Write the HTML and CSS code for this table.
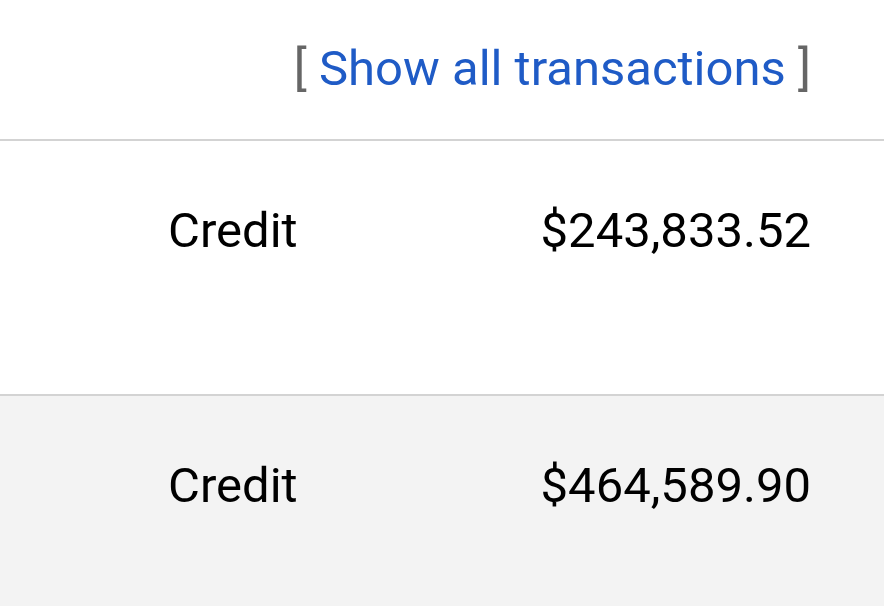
FILE: index.html
```html
<!DOCTYPE html>
<html>
<head>
<meta charset="utf-8">
<link rel="stylesheet" href="styles.css">
</head>
<body>
<div class="panel">
  <div class="header">
    <span class="bracket">[</span> <a class="link" href="#">Show all transactions</a> <span class="bracket">]</span>
  </div>
  <div class="row">
    <span class="type">Credit</span>
    <span class="amount">$243,833.52</span>
  </div>
  <div class="row alt">
    <span class="type">Credit</span>
    <span class="amount">$464,589.90</span>
  </div>
</div>
</body>
</html>
```
FILE: styles.css
```css
html, body {
  margin: 0;
  padding: 0;
  background: #ffffff;
}
body {
  font-family: Roboto, "Liberation Sans", sans-serif;
  font-size: 49px;
  color: #000000;
}
.panel {
  display: flex;
  flex-direction: column;
}
.header {
  height: 141px;
  box-sizing: border-box;
  padding: 40px 73px 0 0;
  text-align: right;
  line-height: 57px;
  border-bottom: 2px solid #d3d3d3;
}
.bracket {
  color: #666666;
}
.link {
  color: #1f5bc6;
  text-decoration: none;
}
.row {
  height: 255px;
  box-sizing: border-box;
  padding: 61px 73px 0 168px;
  display: flex;
  justify-content: space-between;
  line-height: 57px;
  border-bottom: 2px solid #d3d3d3;
}
.row.alt {
  background: #f3f3f3;
  border-bottom: none;
}
```
